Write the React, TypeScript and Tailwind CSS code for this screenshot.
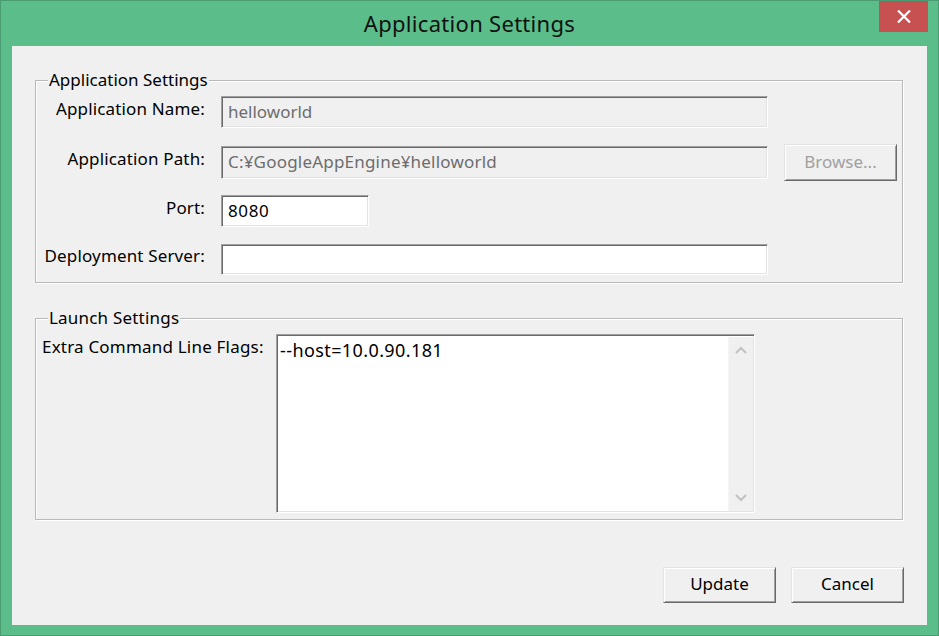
import React from "react";

const sunken =
  "border-t border-l border-[#a0a0a0] border-r border-b border-r-white border-b-white shadow-[inset_1px_1px_0_#696969,inset_-1px_-1px_0_#e3e3e3]";
const raised =
  "border-t border-l border-[#e3e3e3] border-r border-b border-r-[#696969] border-b-[#696969] shadow-[inset_1px_1px_0_#ffffff,inset_-1px_-1px_0_#a0a0a0] bg-[#f0f0f0]";
const groupBox =
  "relative border border-[#b9b9b9] shadow-[inset_1px_1px_0_#ffffff,1px_1px_0_#ffffff]";

function Row({ label, children, mt }: { label: string; children: React.ReactNode; mt: string }) {
  return (
    <div className={`flex h-[32px] items-center ${mt}`}>
      <div className="w-[163px] shrink-0 flex justify-end whitespace-nowrap leading-[22px] -mt-[7px] text-black tracking-[0.15px]">
        <span>{label}</span>
      </div>
      <div className="ml-[16px] flex items-center">{children}</div>
    </div>
  );
}

export default function App() {
  return (
    <div
      className="w-[939px] h-[636px] bg-[#5bbd8a] border border-[#4a9a72] flex flex-col text-[17px] text-black"
      style={{ fontFamily: '"Noto Sans", "Open Sans", sans-serif' }}
    >
      <div className="relative h-[45px] flex items-start justify-end">
        <div className="absolute inset-0 flex items-center justify-center text-[22px] tracking-[0.3px] text-[#111]">
          Application Settings
        </div>
        <div className="relative mr-[10px] w-[49px] h-[31px] bg-[#c75050] flex items-center justify-center">
          <svg width="14" height="13" viewBox="0 0 14 13">
            <path d="M1 0.5 L13 12.5 M13 0.5 L1 12.5" stroke="#fff" strokeWidth="2.2" fill="none" />
          </svg>
        </div>
      </div>

      <div className="mx-[11px] mb-[10px] flex-1 bg-[#f0f0f0] px-[23px] pt-[34px] flex flex-col">
        {/* Application Settings group */}
        <div className={`${groupBox} h-[203px] mr-[1px] pl-[6px] pt-[15px]`}>
          <span className="absolute -top-[12px] left-[12px] px-[1px] bg-[#f0f0f0] leading-[22px] whitespace-nowrap">
            Application Settings
          </span>
          <Row label="Application Name:" mt="">
            <div className={`${sunken} w-[547px] h-[32px] bg-[#f0f0f0] flex items-center pl-[6px] text-[#6d6d6d]`}>
              helloworld
            </div>
          </Row>
          <Row label="Application Path:" mt="mt-[18px]">
            <div className={`${sunken} w-[547px] h-[33px] bg-[#f0f0f0] flex items-center pl-[6px] text-[#6d6d6d] tracking-[0.2px] whitespace-nowrap`}>
              C:¥GoogleAppEngine¥helloworld
            </div>
            <div className={`${raised} ml-[16px] w-[113px] h-[37px] flex items-center justify-center text-[#a0a0a0]`}>
              Browse...
            </div>
          </Row>
          <Row label="Port:" mt="mt-[17px]">
            <div className={`${sunken} w-[148px] h-[32px] bg-white flex items-center pl-[6px] tracking-[0.6px]`}>8080</div>
          </Row>
          <Row label="Deployment Server:" mt="mt-[16px]">
            <div className={`${sunken} w-[547px] h-[31px] bg-white`} />
          </Row>
        </div>

        {/* Launch Settings group */}
        <div className={`${groupBox} mt-[35px] h-[202px] mr-[1px] pl-[6px] pt-[15px] flex items-start`}>
          <span className="absolute -top-[12px] left-[12px] px-[1px] bg-[#f0f0f0] leading-[22px] tracking-[0.2px] whitespace-nowrap">
            Launch Settings
          </span>
          <div className="w-[234px] shrink-0 leading-[22px] mt-[2px] tracking-[0.2px] whitespace-nowrap">Extra Command Line Flags:</div>
          <div className={`${sunken} w-[479px] h-[179px] bg-white flex`}>
            <div className="flex-1 pl-[3px] pt-[4px] leading-[22px] text-[18px] tracking-[0.4px]">--host=10.0.90.181</div>
            <div className="w-[25px] mb-[1px] mt-[2px] mr-[1px] bg-[#f0f0f0] border-l border-[#f5f5f5] flex flex-col items-center justify-between py-[9px]">
              <svg width="12" height="8" viewBox="0 0 12 8">
                <path d="M1 7 L6 2 L11 7" stroke="#c2c2c2" strokeWidth="2" fill="none" />
              </svg>
              <svg width="12" height="8" viewBox="0 0 12 8">
                <path d="M1 1 L6 6 L11 1" stroke="#c2c2c2" strokeWidth="2" fill="none" />
              </svg>
            </div>
          </div>
        </div>

        <div className="mt-[47px] flex justify-end gap-[15px]">
          <div className={`${raised} w-[113px] h-[36px] flex items-center justify-center pb-[2px]`}>Update</div>
          <div className={`${raised} w-[113px] h-[36px] flex items-center justify-center pb-[2px]`}>Cancel</div>
        </div>
      </div>
    </div>
  );
}
